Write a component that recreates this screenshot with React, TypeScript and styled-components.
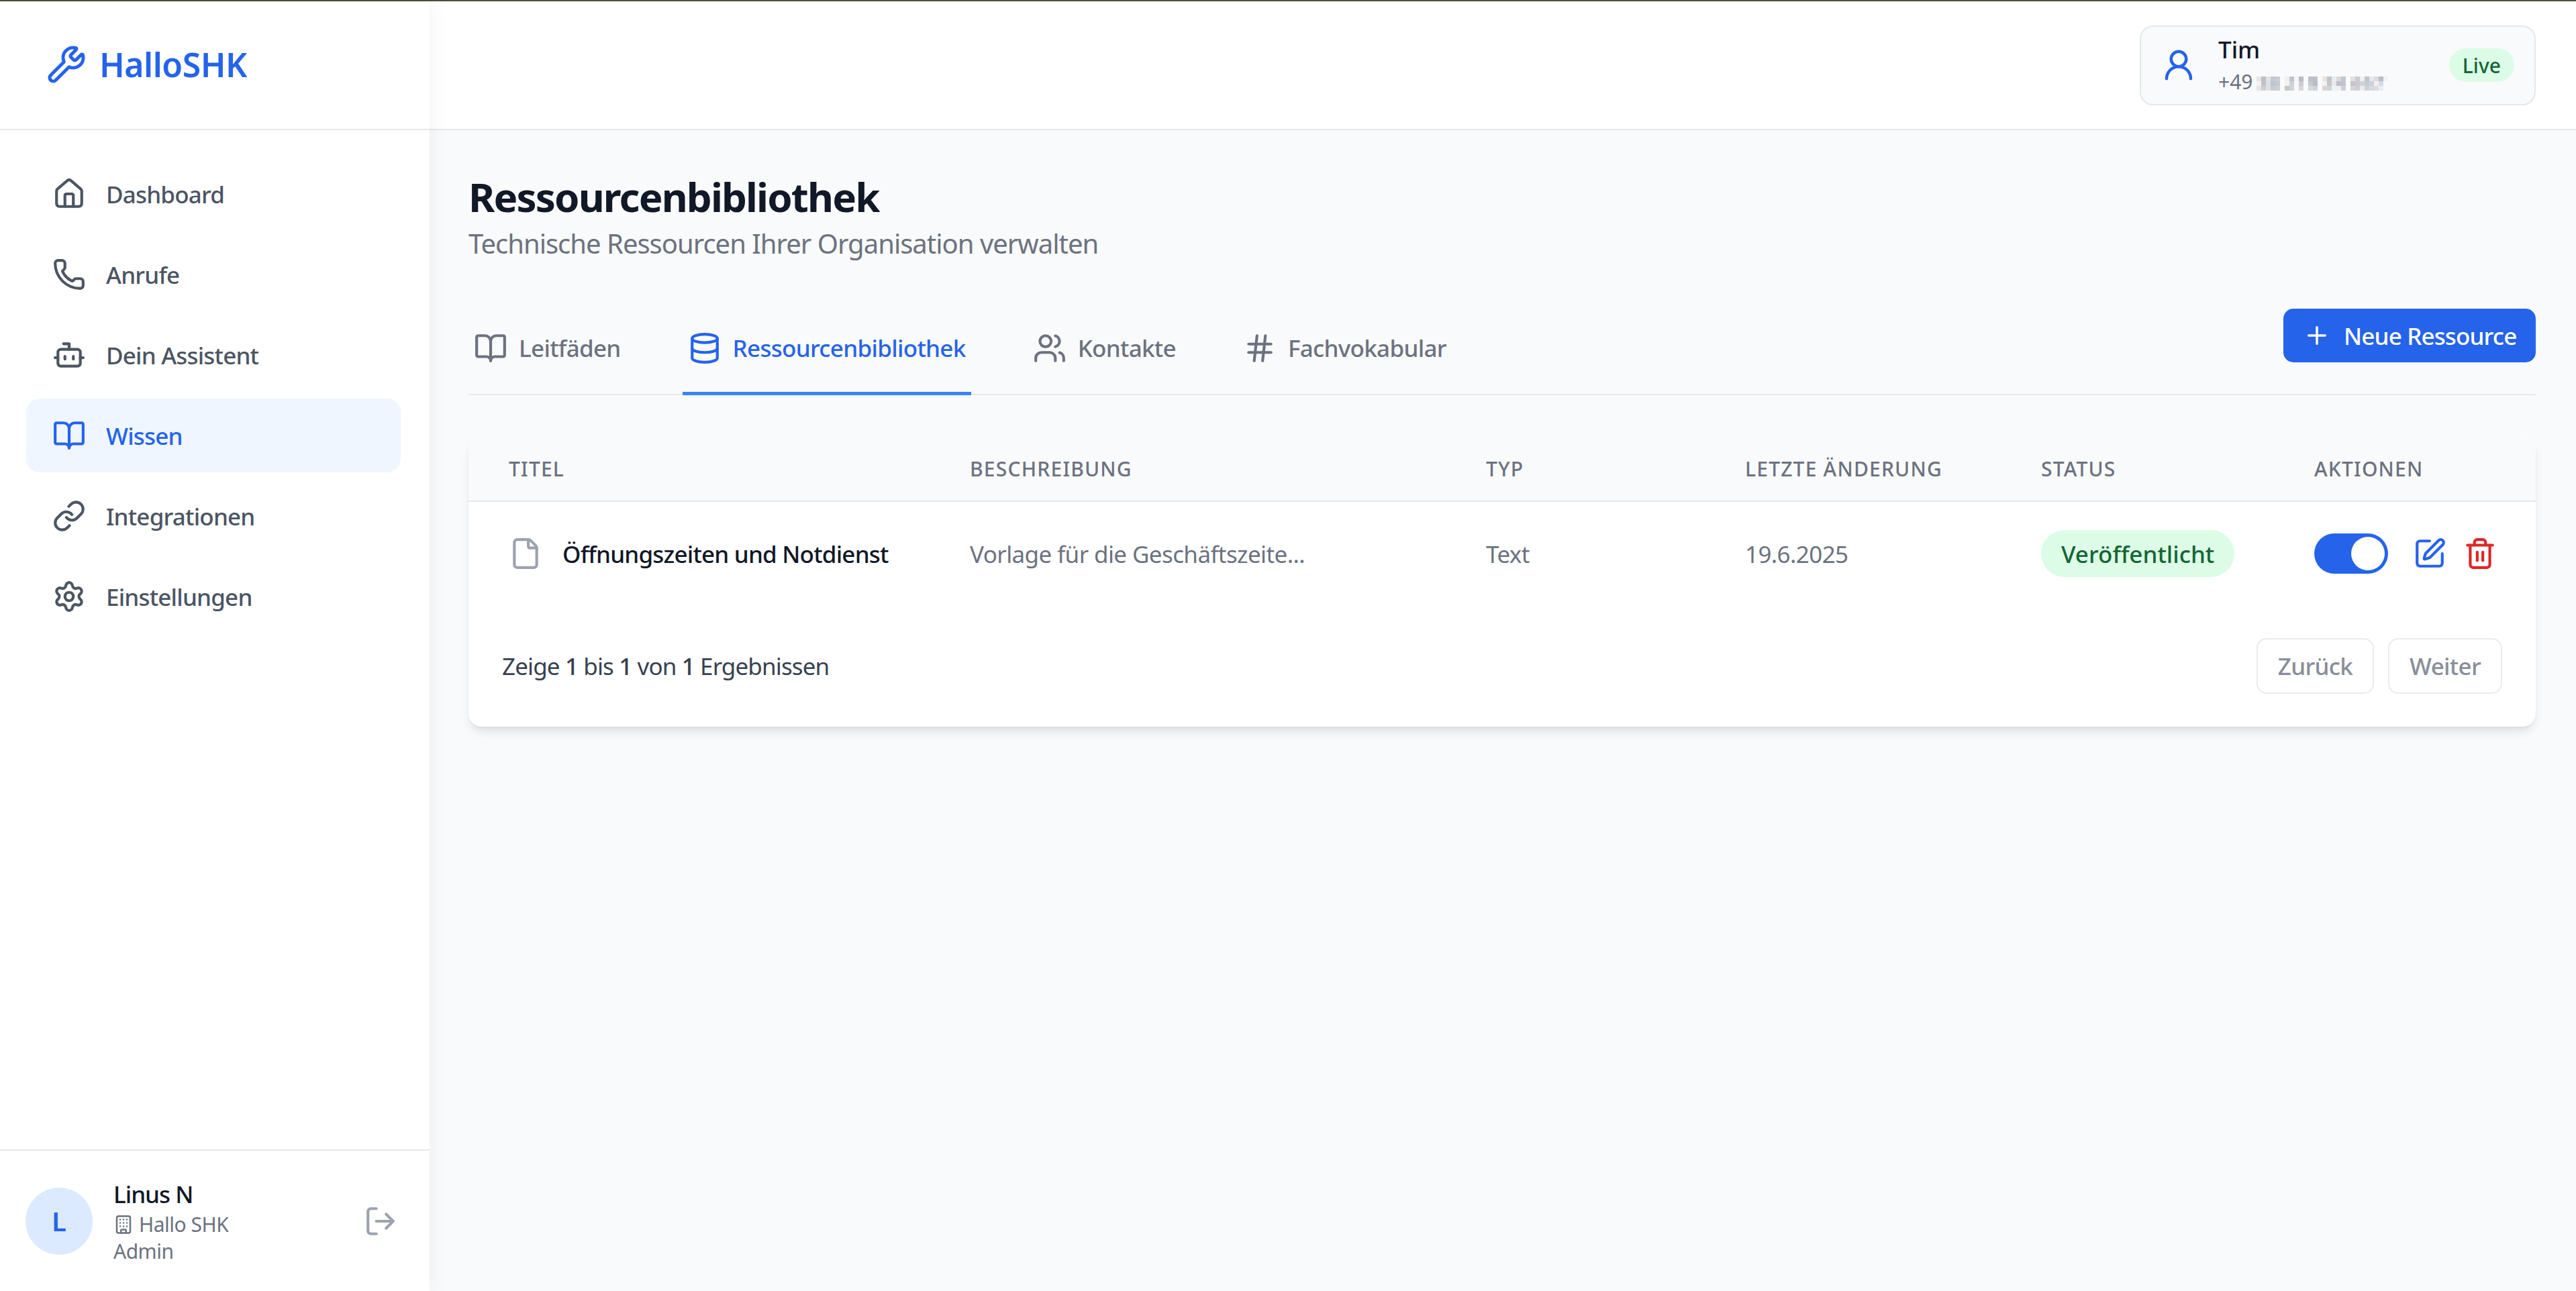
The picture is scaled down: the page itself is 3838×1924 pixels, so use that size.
import React from 'react';
import styled, { createGlobalStyle } from 'styled-components';
import {
  Bot,
  BookOpen,
  Building,
  Database,
  File,
  Hash,
  House,
  Link,
  LogOut,
  Phone,
  Plus,
  Settings,
  SquarePen,
  Trash2,
  UserRound,
  Users,
  Wrench,
} from 'lucide-react';

const GlobalStyle = createGlobalStyle`
  * { box-sizing: border-box; }
  html, body { margin: 0; padding: 0; }
  body {
    background: #f9fafb;
    font-family: "Noto Sans", "Liberation Sans", sans-serif;
    overflow: hidden;
  }
`;

const SHELL = styled.div`
  display: flex;
  height: 1924px;
  border-top: 2px solid #4f4f3c;
`;
const SIDEBAR = styled.aside`
  width: 640px;
  flex: none;
  display: flex;
  flex-direction: column;
  background: #fff;
  box-shadow: 0 0 30px rgba(0, 0, 0, 0.06);
  z-index: 1;
`;
const BRAND = styled.div`
  height: 192px;
  flex: none;
  display: flex;
  align-items: center;
  gap: 19px;
  padding: 0 0 3px 69px;
  border-bottom: 2.5px solid #e5e7eb;
  color: #2563eb;
`;
const BRAND_NAME = styled.span`
  font-size: 50px;
  font-weight: 600;
  letter-spacing: -0.5px;
`;
const NAV = styled.nav`
  flex: 1;
  display: flex;
  flex-direction: column;
  gap: 10px;
  padding: 40px 43px 0 39px;
`;
const NAV_ITEM = styled.a<{ $active?: boolean }>`
  height: 110px;
  display: flex;
  align-items: center;
  gap: 30px;
  padding-left: 39px;
  border-radius: 20px;
  font-size: 35px;
  font-weight: 500;
  letter-spacing: -0.8px;
  color: ${(p) => (p.$active ? '#2563eb' : '#4b5563')};
  background: ${(p) => (p.$active ? '#eff6ff' : 'transparent')};
`;
const USER = styled.div`
  height: 211px;
  flex: none;
  display: flex;
  align-items: center;
  gap: 31px;
  padding: 0 48px 0 38px;
  border-top: 2.5px solid #e5e7eb;
  color: #9ca3af;
`;
const AVATAR = styled.div`
  width: 100px;
  height: 100px;
  flex: none;
  display: flex;
  align-items: center;
  justify-content: center;
  border-radius: 50%;
  background: #dbeafe;
  color: #2563eb;
  font-size: 40px;
  font-weight: 600;
`;
const USER_TEXT = styled.div`
  flex: 1;
  display: flex;
  flex-direction: column;
`;
const USER_NAME = styled.div`
  font-size: 35px;
  line-height: 50px;
  font-weight: 500;
  letter-spacing: -1px;
  color: #111827;
`;
const USER_META = styled.div`
  display: flex;
  align-items: center;
  gap: 8px;
  font-size: 30px;
  line-height: 40px;
  letter-spacing: -0.5px;
  color: #6b7280;
`;
const MAIN = styled.main`
  flex: 1;
  min-width: 0;
  display: flex;
  flex-direction: column;
`;
const TOPBAR = styled.header`
  height: 192px;
  flex: none;
  display: flex;
  align-items: center;
  justify-content: flex-end;
  padding-right: 60px;
  background: #fff;
  border-bottom: 2.5px solid #e5e7eb;
`;
const LINE_CARD = styled.div`
  width: 590px;
  height: 119px;
  display: flex;
  align-items: center;
  gap: 32px;
  padding: 0 30px 0 29px;
  background: #f9fafb;
  border: 2.5px solid #e5e7eb;
  border-radius: 20px;
  color: #2563eb;
`;
const LINE_TEXT = styled.div`
  flex: 1;
  display: flex;
  flex-direction: column;
`;
const LINE_NAME = styled.div`
  font-size: 35px;
  line-height: 50px;
  font-weight: 500;
  color: #111827;
`;
const LINE_PHONE = styled.div`
  display: flex;
  align-items: center;
  gap: 6px;
  font-size: 30px;
  line-height: 46px;
  color: #6b7280;
`;
const PILL = styled.span<{ $size: 'small' | 'large' }>`
  display: inline-flex;
  align-items: center;
  height: ${(p) => (p.$size === 'small' ? '50px' : '70px')};
  padding: 0 ${(p) => (p.$size === 'small' ? '20px' : '30px')};
  border-radius: 35px;
  background: #dcfce7;
  color: #166534;
  font-size: ${(p) => (p.$size === 'small' ? '30px' : '35px')};
  font-weight: 500;
  letter-spacing: 0;
`;
const CONTENT = styled.div`
  flex: 1;
  padding: 59px 60px 0 58px;
`;
const TITLE = styled.h1`
  margin: 0;
  font-size: 60px;
  line-height: 80px;
  font-weight: 700;
  letter-spacing: -1.85px;
  color: #111827;
`;
const SUBTITLE = styled.p`
  margin: 0;
  font-size: 40px;
  line-height: 60px;
  letter-spacing: -1px;
  color: #6b7280;
`;
const TAB_ROW = styled.div`
  display: flex;
  justify-content: space-between;
  align-items: flex-start;
  margin-top: 67px;
  height: 129px;
  border-bottom: 2.5px solid #e5e7eb;
`;
const TABS = styled.div`
  display: flex;
  gap: 84px;
`;
const TAB = styled.a<{ $active?: boolean }>`
  height: 129px;
  display: flex;
  align-items: center;
  gap: 17px;
  padding: 0 8px 7px;
  font-size: 35px;
  font-weight: 500;
  letter-spacing: -0.7px;
  color: ${(p) => (p.$active ? '#2563eb' : '#6b7280')};
  border-bottom: 5px solid ${(p) => (p.$active ? '#3b82f6' : 'transparent')};
`;
const PRIMARY = styled.button`
  width: 376px;
  height: 80px;
  display: flex;
  align-items: center;
  gap: 19px;
  padding: 0 0 0 29px;
  border: 0;
  border-radius: 15px;
  background: #2563eb;
  color: #fff;
  font-family: inherit;
  font-size: 35px;
  font-weight: 500;
  letter-spacing: -0.85px;
`;
const CARD = styled.section`
  margin-top: 61px;
  height: 433px;
  background: #fff;
  border-radius: 20px;
  overflow: hidden;
  box-shadow: 0 10px 15px -3px rgba(0, 0, 0, 0.1), 0 4px 6px -4px rgba(0, 0, 0, 0.1);
`;
const COLUMNS = '687px 769px 386px 441px 407px 390px';
const HEAD_ROW = styled.div`
  height: 98px;
  display: grid;
  grid-template-columns: ${COLUMNS};
  align-items: center;
  background: #f9fafb;
  border-bottom: 2.5px solid #e5e7eb;
`;
const HEAD_CELL = styled.div`
  padding-left: 60px;
  font-size: 30px;
  font-weight: 500;
  letter-spacing: 1.2px;
  text-transform: uppercase;
  color: #6b7280;
`;
const BODY_ROW = styled.div`
  height: 154px;
  display: grid;
  grid-template-columns: ${COLUMNS};
  align-items: center;
`;
const CELL = styled.div`
  padding-left: 60px;
  font-size: 35px;
  letter-spacing: -0.6px;
  color: #6b7280;
`;
const TITLE_CELL = styled(CELL)`
  display: flex;
  align-items: center;
  gap: 30px;
  color: #9ca3af;
`;
const DOC_TITLE = styled.span`
  font-weight: 500;
  letter-spacing: -0.8px;
  color: #111827;
`;
const ACTIONS = styled(CELL)`
  display: flex;
  align-items: center;
`;
const TOGGLE = styled.div`
  width: 110px;
  height: 60px;
  display: flex;
  align-items: center;
  justify-content: flex-end;
  padding-right: 5px;
  margin-right: 37px;
  border-radius: 30px;
  background: #2563eb;
`;
const KNOB = styled.span`
  width: 50px;
  height: 50px;
  border-radius: 50%;
  background: #fff;
`;
const ICON_BTN = styled.span<{ $color: string }>`
  display: flex;
  margin-right: 25px;
  color: ${(p) => p.$color};
`;
const FOOTER = styled.div`
  height: 181px;
  display: flex;
  align-items: center;
  justify-content: space-between;
  padding: 0 50px;
`;
const RESULTS = styled.div`
  font-size: 35px;
  letter-spacing: -0.88px;
  color: #374151;
  b {
    font-weight: 500;
  }
`;
const PAGER = styled.div`
  display: flex;
  gap: 21px;
`;
const PAGE_BTN = styled.button`
  height: 83px;
  padding: 0 30px;
  background: #fff;
  border: 2.5px solid #e5e7eb;
  border-radius: 15px;
  font-family: inherit;
  font-size: 35px;
  font-weight: 500;
  letter-spacing: -0.7px;
  color: #6b7280;
  opacity: 0.8;
`;

// redacted phone digits, one row of swatches per line of the mosaic
const MOSAIC = [
  ['e8e6e4', 'c0bfc4', 'e0e4e8', 'c4c8d0', 'c8ccd4', '', 'f0f0ee', 'c0c4cc', 'f4f4f4', 'b8bac4', '', 'bcbec8', 'bcc0c8', '', 'e8e4e2', 'c0c2c8', 'e8eef2', 'dcd8d6', 'c0c8d4', '', 'e4e0de', 'c8ccd4', 'f0f0f0', 'c0c2c8', 'e4e8ee', 'dcdcdc', 'b8bcc8', 'f0f4f8'],
  ['f4f2f2', 'c4c2c6', 'd4e2ec', 'c0c4cc', 'c4c8d0', '', 'f2f2f0', 'ccd0d8', 'f8f8f8', 'ccccd4', '', 'c8c8d0', 'b8bcc6', '', 'f4f2f0', 'c4c6ce', 'ece8e6', 'bcc0ca', 'c0c4ce', '', 'c4c4cc', 'ccc8cc', 'd0d4da', 'c4ccd4', 'ccd2da', 'f2eeec', 'd4dae2', ''],
  ['e8e4e2', 'd0ced2', 'e0e0e4', 'c8ccd2', 'ccd2da', '', 'c8c4c8', 'd0d4da', 'f8f8f8', 'd8d6dc', '', 'dcd8d8', 'ccd4dc', '', 'dcd4d2', 'ccd4dc', 'eef0f4', 'f0f0ee', 'ccd0da', '', 'd8d4d6', 'ccd0d8', 'eceaea', 'd0d2d6', 'd4dae2', 'e0dcdc', 'e8eef6', ''],
];

function Mosaic(): React.ReactElement {
  return (
    <svg width="196" height="26" viewBox="0 0 196 26" shapeRendering="crispEdges">
      {MOSAIC.map((row, y) =>
        row.map((c, x) =>
          c ? <rect key={`${x}-${y}`} x={x * 7} y={5 + y * 7} width="7" height="7" fill={`#${c}`} /> : null,
        ),
      )}
    </svg>
  );
}

const NAV_ITEMS = [
  { label: 'Dashboard', icon: House },
  { label: 'Anrufe', icon: Phone },
  { label: 'Dein Assistent', icon: Bot },
  { label: 'Wissen', icon: BookOpen, active: true },
  { label: 'Integrationen', icon: Link },
  { label: 'Einstellungen', icon: Settings },
];

const TAB_ITEMS = [
  { label: 'Leitfäden', icon: BookOpen },
  { label: 'Ressourcenbibliothek', icon: Database, active: true },
  { label: 'Kontakte', icon: Users },
  { label: 'Fachvokabular', icon: Hash },
];

export default function App(): React.ReactElement {
  return (
    <>
      <GlobalStyle />
      <SHELL>
        <SIDEBAR>
          <BRAND>
            <Wrench size={60} strokeWidth={2} />
            <BRAND_NAME>HalloSHK</BRAND_NAME>
          </BRAND>
          <NAV>
            {NAV_ITEMS.map(({ label, icon: Icon, active }) => (
              <NAV_ITEM key={label} $active={active}>
                <Icon size={50} />
                {label}
              </NAV_ITEM>
            ))}
          </NAV>
          <USER>
            <AVATAR>L</AVATAR>
            <USER_TEXT>
              <USER_NAME>Linus N</USER_NAME>
              <USER_META>
                <Building size={30} />
                Hallo SHK
              </USER_META>
              <USER_META>Admin</USER_META>
            </USER_TEXT>
            <LogOut size={50} />
          </USER>
        </SIDEBAR>
        <MAIN>
          <TOPBAR>
            <LINE_CARD>
              <UserRound size={54} />
              <LINE_TEXT>
                <LINE_NAME>Tim</LINE_NAME>
                <LINE_PHONE>
                  +49
                  <Mosaic />
                </LINE_PHONE>
              </LINE_TEXT>
              <PILL $size="small">Live</PILL>
            </LINE_CARD>
          </TOPBAR>
          <CONTENT>
            <TITLE>Ressourcenbibliothek</TITLE>
            <SUBTITLE>Technische Ressourcen Ihrer Organisation verwalten</SUBTITLE>
            <TAB_ROW>
              <TABS>
                {TAB_ITEMS.map(({ label, icon: Icon, active }) => (
                  <TAB key={label} $active={active}>
                    <Icon size={50} />
                    {label}
                  </TAB>
                ))}
              </TABS>
              <PRIMARY>
                <Plus size={42} />
                Neue Ressource
              </PRIMARY>
            </TAB_ROW>
            <CARD>
              <HEAD_ROW>
                <HEAD_CELL>Titel</HEAD_CELL>
                <HEAD_CELL>Beschreibung</HEAD_CELL>
                <HEAD_CELL>Typ</HEAD_CELL>
                <HEAD_CELL>Letzte Änderung</HEAD_CELL>
                <HEAD_CELL>Status</HEAD_CELL>
                <HEAD_CELL>Aktionen</HEAD_CELL>
              </HEAD_ROW>
              <BODY_ROW>
                <TITLE_CELL>
                  <File size={50} />
                  <DOC_TITLE>Öffnungszeiten und Notdienst</DOC_TITLE>
                </TITLE_CELL>
                <CELL>Vorlage für die Geschäftszeite...</CELL>
                <CELL>Text</CELL>
                <CELL>19.6.2025</CELL>
                <CELL>
                  <PILL $size="large">Veröffentlicht</PILL>
                </CELL>
                <ACTIONS>
                  <TOGGLE>
                    <KNOB />
                  </TOGGLE>
                  <ICON_BTN $color="#2563eb">
                    <SquarePen size={50} />
                  </ICON_BTN>
                  <ICON_BTN $color="#dc2626">
                    <Trash2 size={50} />
                  </ICON_BTN>
                </ACTIONS>
              </BODY_ROW>
              <FOOTER>
                <RESULTS>
                  Zeige <b>1</b> bis <b>1</b> von <b>1</b> Ergebnissen
                </RESULTS>
                <PAGER>
                  <PAGE_BTN>Zurück</PAGE_BTN>
                  <PAGE_BTN>Weiter</PAGE_BTN>
                </PAGER>
              </FOOTER>
            </CARD>
          </CONTENT>
        </MAIN>
      </SHELL>
    </>
  );
}
